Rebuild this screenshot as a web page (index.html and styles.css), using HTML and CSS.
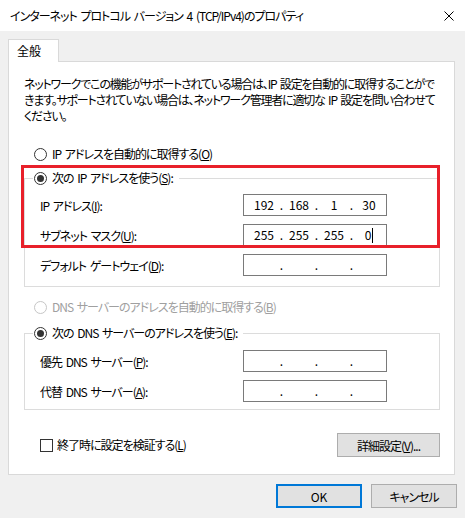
FILE: index.html
```html
<!DOCTYPE html>
<html lang="ja">
<head>
    <meta charset="UTF-8">
    <title>インターネット プロトコル バージョン 4 (TCP/IPv4)のプロパティ</title>
    <link rel="stylesheet" href="styles.css">
</head>
<body>

<div class="window">
    <div class="titlebar">
        <span class="title">インターネット プロトコル バージョン 4 (TCP/IPv4)のプロパティ</span>
        <svg class="close" viewBox="0 0 10 10" width="10" height="10">
            <path d="M0.5 0.5 L9.5 9.5 M9.5 0.5 L0.5 9.5" stroke="#000" stroke-width="1" fill="none"/>
        </svg>
    </div>

    <div class="content">
        <div class="tabs">
            <div class="tab">全般</div>
        </div>

        <div class="panel">
            <p class="desc">ネットワークでこの機能がサポートされている場合は、IP 設定を自動的に取得することがで<br>きます。サポートされていない場合は、ネットワーク管理者に適切な IP 設定を問い合わせて<br>ください。</p>

            <div class="radio radio-top">
                <span class="radio-mark"></span>
                <span>IP アドレスを自動的に取得する(<u>O</u>)</span>
            </div>

            <fieldset class="group group-ip">
                <legend>
                    <span class="radio">
                        <span class="radio-mark checked"></span>
                        <span>次の IP アドレスを使う(<u>S</u>):</span>
                    </span>
                </legend>

                <div class="field-row">
                    <span class="field-label">IP アドレス(<u>I</u>):</span>
                    <div class="ip-box">
                        <span class="seg">192</span><span class="dot">.</span><span class="seg">168</span><span class="dot">.</span><span class="seg">1</span><span class="dot">.</span><span class="seg">30</span>
                    </div>
                </div>
                <div class="field-row">
                    <span class="field-label">サブネット マスク(<u>U</u>):</span>
                    <div class="ip-box">
                        <span class="seg">255</span><span class="dot">.</span><span class="seg">255</span><span class="dot">.</span><span class="seg">255</span><span class="dot">.</span><span class="seg">0<span class="caret"></span></span>
                    </div>
                </div>
                <div class="field-row">
                    <span class="field-label">デフォルト ゲートウェイ(<u>D</u>):</span>
                    <div class="ip-box">
                        <span class="seg"></span><span class="dot">.</span><span class="seg"></span><span class="dot">.</span><span class="seg"></span><span class="dot">.</span><span class="seg"></span>
                    </div>
                </div>

                <!-- annotation box over the static settings -->
                <div class="highlight"></div>
            </fieldset>

            <div class="radio radio-dns disabled">
                <span class="radio-mark"></span>
                <span>DNS サーバーのアドレスを自動的に取得する(<u>B</u>)</span>
            </div>

            <fieldset class="group group-dns">
                <legend>
                    <span class="radio">
                        <span class="radio-mark checked"></span>
                        <span>次の DNS サーバーのアドレスを使う(<u>E</u>):</span>
                    </span>
                </legend>

                <div class="field-row">
                    <span class="field-label">優先 DNS サーバー(<u>P</u>):</span>
                    <div class="ip-box">
                        <span class="seg"></span><span class="dot">.</span><span class="seg"></span><span class="dot">.</span><span class="seg"></span><span class="dot">.</span><span class="seg"></span>
                    </div>
                </div>
                <div class="field-row">
                    <span class="field-label">代替 DNS サーバー(<u>A</u>):</span>
                    <div class="ip-box">
                        <span class="seg"></span><span class="dot">.</span><span class="seg"></span><span class="dot">.</span><span class="seg"></span><span class="dot">.</span><span class="seg"></span>
                    </div>
                </div>
            </fieldset>

            <div class="bottom-row">
                <div class="check">
                    <span class="check-mark"></span>
                    <span>終了時に設定を検証する(<u>L</u>)</span>
                </div>
                <button class="btn btn-detail">詳細設定(<u>V</u>)...</button>
            </div>
        </div>

        <div class="actions">
            <button class="btn btn-dialog btn-default">OK</button>
            <button class="btn btn-dialog">キャンセル</button>
        </div>
    </div>
</div>

</body>
</html>
```

FILE: styles.css
```css
body {
    margin: 0;
    background-color: #f0f0f0;
    font-family: "Noto Sans CJK JP", "Noto Sans", sans-serif;
    font-size: 12px;
    letter-spacing: -1px;
    word-spacing: 2px;
    color: #000;
    font-feature-settings: "palt";
}

.window {
    width: 465px;
    height: 518px;
}

.titlebar {
    height: 31px;
    background-color: #fff;
    display: flex;
    align-items: center;
    justify-content: space-between;
    padding: 0 11px 0 10px;
    box-sizing: border-box;
}

.title {
    line-height: 16px;
}

.content {
    padding: 8px 8px 0 8px;
}

.tabs {
    display: flex;
}

.tab {
    position: relative;
    z-index: 1;
    width: 51px;
    height: 23px;
    box-sizing: border-box;
    margin-bottom: -1px;
    padding-left: 8px;
    line-height: 22px;
    letter-spacing: 0;
    background-color: #fff;
    border: 1px solid #d9d9d9;
    border-bottom: none;
}

.panel {
    margin-right: 2px;
    background-color: #fff;
    border: 1px solid #d9d9d9;
}

.desc {
    margin: 14px 0 0 15px;
    line-height: 16px;
    letter-spacing: -1.2px;
    white-space: nowrap;
}

.radio {
    display: flex;
    align-items: center;
    gap: 5px;
    line-height: 16px;
}

.radio-mark {
    width: 13px;
    height: 13px;
    box-sizing: border-box;
    border: 1px solid #333;
    border-radius: 50%;
    background-color: #fff;
    display: flex;
    align-items: center;
    justify-content: center;
}

.radio-mark.checked::after {
    content: "";
    width: 7px;
    height: 7px;
    border-radius: 50%;
    background-color: #333;
}

.radio-top {
    margin: 22px 0 0 25px;
}

.radio-dns {
    margin: 12px 0 0 25px;
}

.disabled {
    color: #a0a0a0;
}

.disabled .radio-mark {
    border-color: #c6c6c6;
}

.group {
    position: relative;
    width: 416px;
    box-sizing: border-box;
    margin: 8px 0 0 15px;
    padding: 4px 0 6px 0;
    border: 1px solid #dcdcdc;
    min-inline-size: 0;
}

.group-dns {
    margin-top: 10px;
    padding: 5px 0 3px 0;
}

.group legend {
    margin-left: 8px;
    padding: 0 6px 0 1px;
    line-height: 16px;
}

.field-row {
    display: flex;
    align-items: center;
    height: 30px;
    padding-left: 15px;
}

.field-label {
    width: 203px;
}

.ip-box {
    width: 144px;
    height: 22px;
    box-sizing: border-box;
    padding-left: 5px;
    border: 1px solid #7a7a7a;
    display: flex;
    align-items: center;
    line-height: 16px;
    letter-spacing: 0;
}

.seg {
    width: 30px;
    text-align: center;
}

.dot {
    width: 5px;
    text-align: center;
}

.caret {
    display: inline-block;
    width: 1px;
    height: 15px;
    margin-left: 1px;
    vertical-align: -3px;
    background-color: #000;
}

.highlight {
    position: absolute;
    left: -4px;
    top: -21px;
    width: 419px;
    height: 83px;
    box-sizing: border-box;
    border: 3px solid #e8202a;
    pointer-events: none;
}

.bottom-row {
    display: flex;
    align-items: center;
    justify-content: space-between;
    margin: 23px 14px 17px 31px;
}

.check {
    display: flex;
    align-items: center;
    gap: 4px;
    line-height: 16px;
}

.check-mark {
    width: 13px;
    height: 13px;
    box-sizing: border-box;
    border: 1px solid #333;
    background-color: #fff;
}

.btn {
    height: 24px;
    box-sizing: border-box;
    padding: 0;
    font: inherit;
    letter-spacing: -1px;
    color: #000;
    background-color: #e1e1e1;
    border: 1px solid #adadad;
}

.btn-detail {
    width: 103px;
}

.actions {
    display: flex;
    justify-content: flex-end;
    gap: 9px;
    margin-top: 9px;
}

.btn-dialog {
    width: 86px;
}

.btn-default {
    border: 2px solid #0078d7;
    letter-spacing: 0;
}
```
